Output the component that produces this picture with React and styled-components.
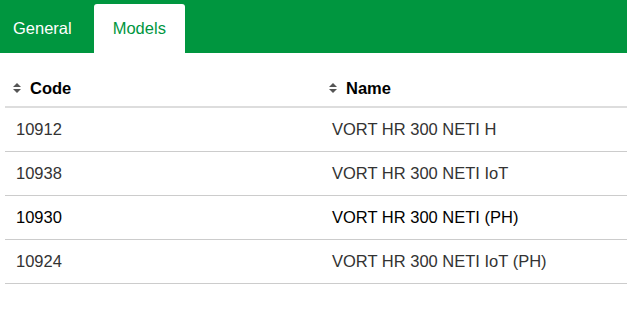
import React from "react";
import styled, { createGlobalStyle } from "styled-components";

const GlobalStyle = createGlobalStyle`
  body {
    margin: 0;
    background: #fff;
    font-family: "Liberation Sans", Arial, sans-serif;
  }
`;

const TabBar = styled.nav`
  display: flex;
  align-items: flex-end;
  height: 53px;
  background-color: #00963f;
`;

const Tab = styled.div`
  display: flex;
  align-items: center;
  height: 49px;
  padding: 0 19px;
  margin-right: 3px;
  border-radius: 3px 3px 0 0;
  font-size: 16.5px;
  color: ${(p) => (p.$active ? "#00963f" : "#fff")};
  background-color: ${(p) => (p.$active ? "#fff" : "transparent")};

  &:first-child {
    padding-left: 13px;
  }
`;

const TableWrap = styled.div`
  padding: 16px 0 0 5px;
`;

const Table = styled.table`
  width: 100%;
  border-collapse: collapse;
  font-size: 16.5px;
  line-height: 17px;
`;

const HeadCell = styled.th`
  text-align: left;
  font-weight: 700;
  color: #000;
  padding: 10px 8px 9px;
  border-bottom: 2px solid #ddd;
  width: ${(p) => p.$width || "auto"};
`;

const SortLabel = styled.span`
  display: inline-flex;
  align-items: center;
  gap: 9px;
`;

const Row = styled.tr`
  color: ${(p) => (p.$hover ? "#000" : "#333")};
`;

const Cell = styled.td`
  padding: 13px 11px;
  border-bottom: 1px solid #ccc;
`;

const SortIcon = () => (
  <svg width="8" height="10" viewBox="0 0 8 10">
    <path d="M4 0 L8 4 H0 Z M0 6 H8 L4 10 Z" fill="#555" />
  </svg>
);

const models = [
  { code: "10912", name: "VORT HR 300 NETI H" },
  { code: "10938", name: "VORT HR 300 NETI IoT" },
  { code: "10930", name: "VORT HR 300 NETI (PH)", hover: true },
  { code: "10924", name: "VORT HR 300 NETI IoT (PH)" },
];

const App = () => {
  return (
    <>
      <GlobalStyle />
      <TabBar>
        <Tab>General</Tab>
        <Tab $active>Models</Tab>
      </TabBar>
      <TableWrap>
        <Table>
          <thead>
            <tr>
              <HeadCell $width="300px">
                <SortLabel>
                  <SortIcon />
                  Code
                </SortLabel>
              </HeadCell>
              <HeadCell>
                <SortLabel>
                  <SortIcon />
                  Name
                </SortLabel>
              </HeadCell>
            </tr>
          </thead>
          <tbody>
            {models.map((m) => (
              <Row key={m.code} $hover={m.hover}>
                <Cell>{m.code}</Cell>
                <Cell>{m.name}</Cell>
              </Row>
            ))}
          </tbody>
        </Table>
      </TableWrap>
    </>
  );
};

export default App;
